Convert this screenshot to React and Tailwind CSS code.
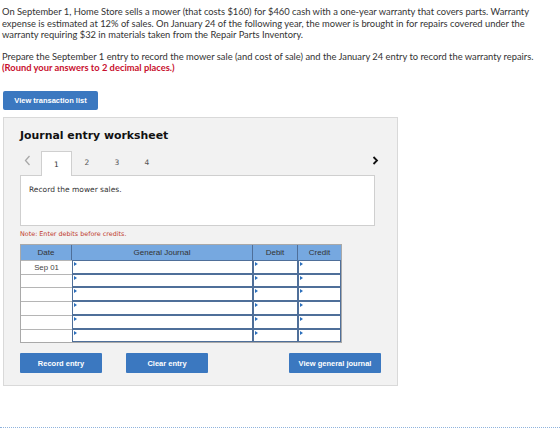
import React from "react";

const rows = ["Sep 01", "", "", "", "", ""];

function Marker() {
  return (
    <span className="absolute left-[1px] top-[1px] w-0 h-0 border-t-[2px] border-b-[2px] border-l-[3px] border-t-transparent border-b-transparent border-l-[#2a6ebb]" />
  );
}

function InputCell() {
  return (
    <div className="relative h-full bg-white border-[1.5px] border-[#4f6f99]">
      <Marker />
    </div>
  );
}

export default function App() {
  return (
    <div className="w-[560px] h-[436px] bg-white relative overflow-hidden text-[#333]">
      <div className="pl-[2px] pr-[10px] pt-[6px] text-[9.35px] leading-[11.6px] text-[#333]" style={{ fontFamily: "Lato, 'Open Sans', sans-serif" }}>
        <p>
          On September 1, Home Store sells a mower (that costs $160) for $460 cash with a one-year warranty that covers parts. Warranty expense is estimated at 12% of sales. On January 24 of the following year, the mower is brought in for repairs covered under the warranty requiring $32 in materials taken from the Repair Parts Inventory.
        </p>
        <p className="mt-[10px]">
          Prepare the September 1 entry to record the mower sale (and cost of sale) and the January 24 entry to record the warranty repairs.
        </p>
        <p className="font-bold text-[#c8102e]">(Round your answers to 2 decimal places.)</p>
      </div>

      <div className="mt-[11px] ml-[3px]">
        <button className="w-[95px] h-[19px] bg-[#3b78c0] rounded-[2px] text-white text-[7.5px] font-bold" style={{ fontFamily: "'Liberation Sans', Arial, sans-serif" }}>
          View transaction list
        </button>
      </div>

      <div className="mt-[7px] ml-[3px] w-[395px] h-[269px] bg-[#f2f2f2] border border-[#d9d9d9] pl-[16px] pr-[14px]">
        <div className="pt-[10px] text-[10.9px] font-bold text-[#111]" style={{ fontFamily: "'DejaVu Sans', Verdana, sans-serif" }}>
          Journal entry worksheet
        </div>

        <div className="relative mt-[6px] w-[355px] h-[25px] flex items-end" style={{ fontFamily: "'DejaVu Sans', Verdana, sans-serif" }}>
          <svg className="absolute left-[4px] top-[5px]" width="7" height="11" viewBox="0 0 7 11">
            <polyline points="5.5,1 1.5,5.5 5.5,10" fill="none" stroke="#a8a8a8" strokeWidth="1.3" />
          </svg>
          <div className="ml-[21px] w-[31px] h-[25px] bg-white border border-b-0 border-[#cfcfcf] flex items-center justify-center text-[7.5px] text-[#333] relative z-10 -mb-[1px]">
            1
          </div>
          <div className="w-[30px] h-[25px] flex items-center justify-center text-[7.5px] text-[#555]">2</div>
          <div className="w-[30px] h-[25px] flex items-center justify-center text-[7.5px] text-[#555]">3</div>
          <div className="w-[30px] h-[25px] flex items-center justify-center text-[7.5px] text-[#555]">4</div>
          <svg className="absolute right-[-4px] top-[6px]" width="7" height="9" viewBox="0 0 7 9">
            <polyline points="1.5,1 5,4.5 1.5,8" fill="none" stroke="#111" strokeWidth="1.8" />
          </svg>
        </div>

        <div className="w-[355px] h-[51px] bg-white border border-[#cfcfcf] pl-[8px] pt-[8px] text-[7.5px] text-[#333]" style={{ fontFamily: "'DejaVu Sans', Verdana, sans-serif" }}>
          Record the mower sales.
        </div>

        <div className="mt-[4px] text-[6.4px] text-[#c0392b]" style={{ fontFamily: "'DejaVu Sans', Verdana, sans-serif" }}>
          Note: Enter debits before credits.
        </div>

        <div className="mt-[4px] w-[322px] border border-[#a9a9a9]" style={{ fontFamily: "'Liberation Sans', Arial, sans-serif" }}>
          <div className="grid grid-cols-[51px_181px_45px_43px] h-[15px] bg-[#76a8e0] text-[8px] text-[#333]">
            <div className="flex items-center justify-center border-r border-[#4f6f99]">Date</div>
            <div className="flex items-center justify-center border-r border-[#4f6f99]">General Journal</div>
            <div className="flex items-center justify-center border-r border-[#4f6f99]">Debit</div>
            <div className="flex items-center justify-center">Credit</div>
          </div>
          {rows.map((d, i) => (
            <div key={i} className="grid grid-cols-[51px_181px_45px_43px] h-[13.7px]">
              <div className="bg-white border-t border-[#b5b5b5] flex items-center justify-center text-[7.8px] text-[#444]">{d}</div>
              <InputCell />
              <InputCell />
              <InputCell />
            </div>
          ))}
        </div>

        <div className="mt-[10px] flex items-center text-white text-[7.5px] font-bold" style={{ fontFamily: "'Liberation Sans', Arial, sans-serif" }}>
          <button className="shrink-0 w-[82px] h-[20px] bg-[#3b78c0] rounded-[1px]">Record entry</button>
          <button className="shrink-0 ml-[24px] w-[82px] h-[20px] bg-[#3b78c0] rounded-[1px]">Clear entry</button>
          <button className="shrink-0 ml-[81px] w-[92px] h-[20px] bg-[#3b78c0] rounded-[1px]">View general journal</button>
        </div>
      </div>

      <div className="absolute left-0 right-0 top-[427px] border-t border-dotted border-[#8fb3dd]" />
    </div>
  );
}
